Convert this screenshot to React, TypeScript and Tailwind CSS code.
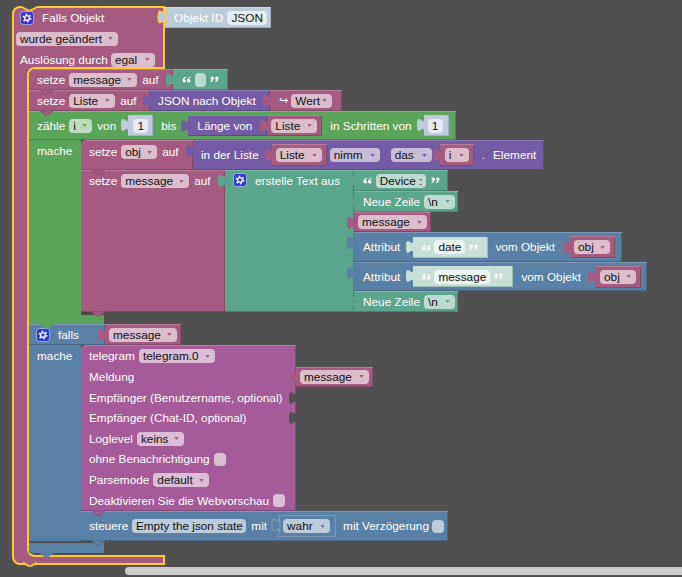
import React from "react";
import clsx from "clsx";

type ToneName = "mag" | "green" | "teal" | "purple" | "blue" | "tele";
const TONES: Record<ToneName, { block: string; field: string; fill: string; dark: string }> = {
  mag: { block: "bg-[#a55b80] shadow-[inset_0_1px_0_#b87d9a,inset_-1px_0_0_#844966,inset_0_-1px_0_#844966]", field: "bg-[#dbbdcc]", fill: "#a55b80", dark: "#844966" },
  green: { block: "bg-[#5ba55b] shadow-[inset_0_1px_0_#7cb77c,inset_-1px_0_0_#498449,inset_0_-1px_0_#498449]", field: "bg-[#bddbbd]", fill: "#5ba55b", dark: "#498449" },
  teal: { block: "bg-[#5ba58c] shadow-[inset_0_1px_0_#7cb7a3,inset_-1px_0_0_#498470,inset_0_-1px_0_#498470]", field: "bg-[#bddbd1]", fill: "#5ba58c", dark: "#498470" },
  purple: { block: "bg-[#745ba5] shadow-[inset_0_1px_0_#907cb7,inset_-1px_0_0_#5d4984,inset_0_-1px_0_#5d4984]", field: "bg-[#c7bddb]", fill: "#745ba5", dark: "#5d4984" },
  blue: { block: "bg-[#5b80a5] shadow-[inset_0_1px_0_#7c99b7,inset_-1px_0_0_#496684,inset_0_-1px_0_#496684]", field: "bg-[#bdccdb]", fill: "#5b80a5", dark: "#496684" },
  tele: { block: "bg-[#a55b99] shadow-[inset_0_1px_0_#b77cad,inset_-1px_0_0_#84497a,inset_0_-1px_0_#84497a]", field: "bg-[#dbbdd6]", fill: "#a55b99", dark: "#84497a" },
};

function Tab({ fill, stroke, className }: { fill: string; stroke?: string; className?: string }) {
  return (
    <svg viewBox="0 0 9 15" className={clsx("absolute right-[calc(100%-1px)] z-10 h-[14px] w-[8px] overflow-visible", className)} aria-hidden="true">
      <path d="M9,0 h-1 c0,10 -8,-8 -8,7.5 s8,-2.5 8,7.5 h1 z" fill={fill} stroke={stroke ?? "none"} strokeWidth={stroke ? 1.2 : 0} />
    </svg>
  );
}

function Slot() {
  return (
    <div className="relative h-[14px] w-0 shrink-0">
      <svg viewBox="0 0 9 15" className="absolute left-[-7px] top-0 h-[14px] w-[8px]" aria-hidden="true">
        <path d="M9,0 h-1 c0,10 -8,-8 -8,7.5 s8,-2.5 8,7.5 h1 z" fill="#505050" />
      </svg>
    </div>
  );
}

function Notch({ fill, dark }: { fill: string; dark: string }) {
  return (
    <svg viewBox="0 -1 13 6" className="absolute left-[11px] top-[calc(100%-1px)] z-10 h-[6px] w-[13px]" aria-hidden="true">
      <path d="M0 0l5 4h3l5-4z" fill={fill} stroke={dark} strokeWidth=".8" />
      <path d="M0 -.5h13v1H0z" fill={fill} />
    </svg>
  );
}

function B({
  tone,
  className,
  tab,
  notch,
  children,
}: {
  tone: ToneName;
  className?: string;
  tab?: boolean;
  notch?: boolean;
  children?: React.ReactNode;
}) {
  const t = TONES[tone];
  return (
    <div className={clsx("relative flex shrink-0 items-center", t.block, className)}>
      {tab && <Tab fill={t.fill} className="top-[4px]" />}
      {children}
      {notch && <Notch fill={t.fill} dark={t.dark} />}
    </div>
  );
}

function Txt({ children, className }: { children: React.ReactNode; className?: string }) {
  return <span className={clsx("shrink-0 whitespace-nowrap leading-[14px] text-white", className)}>{children}</span>;
}

function Dd({ label, tone, className, field }: { label: string; tone: ToneName; className: string; field?: string }) {
  const t = TONES[tone];
  return (
    <div className={clsx("relative flex h-[14px] shrink-0 items-center rounded-[4px] pl-[4px] leading-[14px] text-[#111]", field ?? t.field, className)}>
      {label}
      <svg viewBox="0 0 6 4" className="absolute right-[5px] top-[5.5px] h-[3px] w-[5px]" aria-hidden="true">
        <path d="M0 0h6L3 4z" fill={t.fill} />
      </svg>
    </div>
  );
}

function Field({ children, className }: { children?: React.ReactNode; className: string }) {
  return <div className={clsx("flex h-[14px] shrink-0 items-center justify-center rounded-[4px] leading-[14px] text-[#111]", className)}>{children}</div>;
}

function Quote({ close, className, fill = "#fff" }: { close?: boolean; className?: string; fill?: string }) {
  return (
    <svg viewBox="0 0 10 7" className={clsx("h-[7px] w-[9px] shrink-0", close && "rotate-180", className)} aria-hidden="true">
      <path d="M4 .5C2 1.2.5 2.8.5 4.8a1.9 1.9 0 1 0 2-1.7c.2-.7.8-1.2 1.9-1.6z" fill={fill} />
      <path d="M9.2 .5C7.2 1.2 5.7 2.8 5.7 4.8a1.9 1.9 0 1 0 2-1.7c.2-.7.8-1.2 1.9-1.6z" fill={fill} />
    </svg>
  );
}

function Gear({ fill = "#2a30d6", className }: { fill?: string; className?: string }) {
  return (
    <svg viewBox="0 0 14 14" className={clsx("h-[14px] w-[14px] shrink-0", className)} aria-hidden="true">
      <rect x=".5" y=".5" width="13" height="13" rx="3" fill={fill} stroke="#c8c8e8" strokeOpacity=".7" />
      <circle cx="7" cy="7" r="2.4" fill="none" stroke="#fff" strokeWidth="1.4" />
      <circle cx="7" cy="7" r="3.9" fill="none" stroke="#fff" strokeWidth="1.2" strokeDasharray="1.8 2.3" />
    </svg>
  );
}

function Check({ className }: { className: string }) {
  return <div className={clsx("h-[13px] w-[12px] shrink-0 rounded-[4px]", className)} />;
}

export default function App() {
  return (
    <div className="relative h-[577px] w-[682px] overflow-hidden bg-[#505050] font-['Liberation_Sans',Arial,sans-serif] text-[11.8px]">
      <div className="flex flex-col pl-[12px] pt-[6px]">
        {/* Top row: trigger head and its attached value */}
        <div className="flex">
          <div className="relative flex h-[61px] w-[153px] shrink-0 flex-col rounded-tl-[8px] border-x-2 border-t-2 border-[#fdc835] bg-[#a55b80]">
            <svg viewBox="0 0 15 5" className="absolute left-[8px] top-[-2px] h-[5px] w-[15px]" aria-hidden="true">
              <path d="M0 1l6 3.4h3L15 1V0H0z" fill="#505050" />
              <path d="M0 1l6 3.4h3L15 1" fill="none" stroke="#fdc835" strokeWidth="1.8" />
            </svg>
            <div className="flex h-[20px] shrink-0 items-center pl-[6px]">
              <Gear fill="#3a2fd0" />
              <Txt className="ml-[8px]">Falls Objekt</Txt>
            </div>
            <div className="flex h-[21px] shrink-0 items-center pl-[2px]">
              <Dd label="wurde geändert" tone="mag" className="w-[102px]" />
            </div>
            <div className="flex h-[21px] shrink-0 items-center pl-[6px]">
              <Txt>Auslösung durch</Txt>
              <Dd label="egal" tone="mag" className="ml-[3px] w-[44px]" />
            </div>
          </div>
          <div className="relative mt-[1px] flex h-[21px] w-[106px] shrink-0 items-center bg-[#bdccdb] pl-[9px] shadow-[inset_0_1px_0_#d0dbe6,inset_-1px_0_0_#9fb0c2,inset_0_-1px_0_#9fb0c2]">
            <Tab fill="#bdccdb" stroke="#fdc835" className="top-[3px]" />
            <Txt>Objekt ID</Txt>
            <Field className="ml-[4px] w-[40px] bg-[#e6edf3]">JSON</Field>
          </div>
        </div>

        {/* Statement body */}
        <div className="flex w-[153px] border-l-2 border-[#fdc835] bg-[#a55b80] pl-[13px]">
          <div className="flex w-[138px] flex-col rounded-l-[8px] border-b-2 border-l-2 border-t-2 border-[#fdc835] bg-[#505050] pb-[2px]">
            {/* setze message */}
            <div className="flex">
              <B tone="mag" notch className="h-[21px] w-[144px] rounded-tl-[6px] pl-[8px]">
                <Txt>setze</Txt>
                <Dd label="message" tone="mag" className="ml-[4px] w-[68px]" />
                <Txt className="ml-[5px]">auf</Txt>
              </B>
              <B tone="teal" tab className="h-[21px] w-[55px] pl-[9px]">
                <Quote />
                <Field className="ml-[4px] w-[11px] bg-[#bddbd1]" />
                <Quote close className="ml-[4px]" />
              </B>
            </div>
            {/* setze Liste */}
            <div className="flex">
              <B tone="mag" notch className="h-[21px] w-[121px] pl-[8px]">
                <Txt>setze</Txt>
                <Dd label="Liste" tone="mag" className="ml-[4px] w-[46px]" />
                <Txt className="ml-[5px]">auf</Txt>
              </B>
              <B tone="purple" tab className="h-[21px] w-[120px] pl-[8px]">
                <Txt>JSON nach Objekt</Txt>
              </B>
              <B tone="mag" tab className="h-[21px] w-[72px] pl-[9px]">
                <Txt className="font-['DejaVu_Sans',sans-serif] text-[11px]">↪</Txt>
                <Dd label="Wert" tone="mag" className="ml-[3px] w-[41px]" />
              </B>
            </div>
            {/* zähle */}
            <div className="flex w-[427px] flex-col">
              <B tone="green" className="h-[29px] w-[427px] pl-[8px]">
                <Txt>zähle</Txt>
                <Dd label="i" tone="green" className="ml-[4px] w-[23px]" />
                <Txt className="ml-[5px]">von</Txt>
                <div className="relative ml-[12px] flex h-[21px] w-[25px] shrink-0 items-center bg-[#c3c9dd] pl-[5px] shadow-[inset_-1px_0_0_#a3abc6,inset_0_-1px_0_#a3abc6]">
                  <Tab fill="#c3c9dd" className="top-[3px]" />
                  <Field className="w-[15px] bg-[#e7eaf2]">1</Field>
                </div>
                <Txt className="ml-[8px]">bis</Txt>
                <B tone="purple" tab className="ml-[12px] h-[21px] w-[79px] pl-[9px]">
                  <Txt>Länge von</Txt>
                </B>
                <B tone="mag" tab className="h-[21px] w-[55px] pl-[4px]">
                  <Dd label="Liste" tone="mag" className="w-[46px]" />
                </B>
                <Txt className="ml-[8px]">in Schritten von</Txt>
                <div className="relative ml-[12px] flex h-[21px] w-[25px] shrink-0 items-center bg-[#c3c9dd] pl-[4px] shadow-[inset_-1px_0_0_#a3abc6,inset_0_-1px_0_#a3abc6]">
                  <Tab fill="#c3c9dd" className="top-[3px]" />
                  <Field className="w-[15px] bg-[#e7eaf2]">1</Field>
                </div>
              </B>
              <div className="flex">
                <div className="w-[52px] shrink-0 bg-[#5ba55b] pl-[8px] pt-[3px]">
                  <Txt>mache</Txt>
                </div>
                <div className="flex flex-col">
                  {/* setze obj */}
                  <div className="flex">
                    <B tone="mag" notch className="h-[30px] w-[112px] items-start rounded-tl-[6px] pl-[8px] pt-[5px]">
                      <Txt>setze</Txt>
                      <Dd label="obj" tone="mag" className="ml-[4px] w-[36px]" />
                      <Txt className="ml-[5px]">auf</Txt>
                    </B>
                    <B tone="purple" tab className="h-[30px] w-[351px] pl-[8px]">
                      <Txt>in der Liste</Txt>
                      <B tone="mag" tab className="ml-[13px] h-[22px] w-[55px] pl-[4px]">
                        <Dd label="Liste" tone="mag" className="w-[46px]" />
                      </B>
                      <Dd label="nimm" tone="purple" className="ml-[3px] w-[50px]" />
                      <Dd label="das" tone="purple" className="ml-[11px] w-[41px]" />
                      <B tone="mag" tab className="ml-[8px] h-[22px] w-[34px] pl-[5px]">
                        <Dd label="i" tone="mag" className="w-[24px]" />
                      </B>
                      <Txt className="ml-[8px]">.</Txt>
                      <Txt className="ml-[8px]">Element</Txt>
                    </B>
                  </div>
                  {/* setze message + erstelle Text */}
                  <div className="flex">
                    <B tone="mag" notch className="h-[142px] w-[144px] items-start pl-[8px] pt-[4px]">
                      <Txt>setze</Txt>
                      <Dd label="message" tone="mag" className="ml-[4px] w-[68px]" />
                      <Txt className="ml-[5px]">auf</Txt>
                    </B>
                    <B tone="teal" tab className="h-[142px] w-[129px] items-start pl-[8px] pt-[3px]">
                      <Gear fill="#2a3ad8" />
                      <Txt className="ml-[8px] mt-[1px]">erstelle Text aus</Txt>
                    </B>
                    <div className="flex flex-col">
                      <B tone="teal" tab className="h-[21px] w-[94px] pl-[9px]">
                        <Quote />
                        <Field className="ml-[4px] w-[50px] bg-[#bddbd1]">Device :</Field>
                        <Quote close className="ml-[5px]" />
                      </B>
                      <B tone="teal" tab className="h-[21px] w-[104px] pl-[9px]">
                        <Txt>Neue Zeile</Txt>
                        <Dd label="\n" tone="teal" className="ml-[4px] w-[31px]" />
                      </B>
                      <B tone="mag" tab className="h-[20px] w-[77px] pl-[4px]">
                        <Dd label="message" tone="mag" className="w-[69px]" />
                      </B>
                      <B tone="blue" tab className="h-[30px] w-[268px] pl-[9px]">
                        <Txt>Attribut</Txt>
                        <div className="relative ml-[13px] flex h-[21px] w-[75px] shrink-0 items-center bg-[#c7e0d8] pl-[9px] shadow-[inset_-1px_0_0_#9dbdb2,inset_0_-1px_0_#9dbdb2]">
                          <Tab fill="#c7e0d8" className="top-[3px]" />
                          <Quote />
                          <Field className="ml-[3px] w-[31px] bg-[#edf5f2]">date</Field>
                          <Quote close className="ml-[4px]" />
                        </div>
                        <Txt className="ml-[7px]">vom Objekt</Txt>
                        <B tone="mag" tab className="ml-[15px] h-[22px] w-[45px] pl-[4px]">
                          <Dd label="obj" tone="mag" className="w-[36px]" />
                        </B>
                      </B>
                      <B tone="blue" tab className="h-[29px] w-[293px] pl-[9px]">
                        <Txt>Attribut</Txt>
                        <div className="relative ml-[13px] flex h-[21px] w-[100px] shrink-0 items-center bg-[#c7e0d8] pl-[9px] shadow-[inset_-1px_0_0_#9dbdb2,inset_0_-1px_0_#9dbdb2]">
                          <Tab fill="#c7e0d8" className="top-[3px]" />
                          <Quote />
                          <Field className="ml-[3px] w-[56px] bg-[#edf5f2]">message</Field>
                          <Quote close className="ml-[4px]" />
                        </div>
                        <Txt className="ml-[8px]">vom Objekt</Txt>
                        <B tone="mag" tab className="ml-[14px] h-[22px] w-[46px] pl-[5px]">
                          <Dd label="obj" tone="mag" className="w-[36px]" />
                        </B>
                      </B>
                      <B tone="teal" tab className="h-[21px] w-[104px] pl-[9px]">
                        <Txt>Neue Zeile</Txt>
                        <Dd label="\n" tone="teal" className="ml-[4px] w-[31px]" />
                      </B>
                    </div>
                  </div>
                </div>
              </div>
              <div className="flex h-[3px] w-[75px]">
                <div className="w-[52px] bg-[#5ba55b]" />
                <div className="flex-1 rounded-bl-[3px] bg-[#484848]" />
              </div>
              <div className="relative h-[9px] w-[75px] bg-[#5ba55b]">
                <Notch fill="#5ba55b" dark="#5ba55b" />
              </div>
            </div>
            {/* falls */}
            <div className="flex">
              <B tone="blue" className="h-[21px] w-[76px] pl-[7px]">
                <Gear fill="#2a3ad8" />
                <Txt className="ml-[8px]">falls</Txt>
              </B>
              <B tone="mag" tab className="h-[21px] w-[76px] pl-[4px]">
                <Dd label="message" tone="mag" className="w-[68px]" />
              </B>
            </div>
            <div className="flex">
              <div className="w-[52px] shrink-0 bg-[#5b80a5] pl-[8px] pt-[3px]">
                <Txt>mache</Txt>
              </div>
              <div className="flex flex-col">
                <B tone="tele" notch className="h-[166px] w-[215px] flex-col items-stretch rounded-tl-[6px] pl-[8px] pt-[1px]">
                  <div className="flex flex-1 items-center">
                    <Txt>telegram</Txt>
                    <Dd label="telegram.0" tone="tele" className="ml-[4px] w-[76px]" />
                  </div>
                  <div className="flex flex-1 items-center">
                    <Txt className="w-[207px]">Meldung</Txt>
                    <B tone="mag" tab className="h-[20px] w-[77px] pl-[4px]">
                      <Dd label="message" tone="mag" className="w-[69px]" />
                    </B>
                  </div>
                  <div className="flex flex-1 items-center">
                    <Txt className="w-[207px]">Empfänger (Benutzername, optional)</Txt>
                    <Slot />
                  </div>
                  <div className="flex flex-1 items-center">
                    <Txt className="w-[207px]">Empfänger (Chat-ID, optional)</Txt>
                    <Slot />
                  </div>
                  <div className="flex flex-1 items-center">
                    <Txt>Loglevel</Txt>
                    <Dd label="keins" tone="tele" className="ml-[4px] w-[47px]" />
                  </div>
                  <div className="flex flex-1 items-center">
                    <Txt>ohne Benachrichtigung</Txt>
                    <Check className="ml-[4px] bg-[#dbbdd6]" />
                  </div>
                  <div className="flex flex-1 items-center">
                    <Txt>Parsemode</Txt>
                    <Dd label="default" tone="tele" className="ml-[4px] w-[56px]" />
                  </div>
                  <div className="flex flex-1 items-center">
                    <Txt>Deaktivieren Sie die Webvorschau</Txt>
                    <Check className="ml-[4px] bg-[#dbbdd6]" />
                  </div>
                </B>
                <B tone="blue" notch className="h-[30px] w-[367px] rounded-bl-[4px] pl-[8px]">
                  <Txt>steuere</Txt>
                  <Field className="ml-[4px] w-[114px] bg-[#bdccdb]">Empty the json state</Field>
                  <Txt className="ml-[5px]">mit</Txt>
                  <div className="relative ml-[11px] flex h-[22px] w-[58px] shrink-0 items-center border border-[#7c99b7] bg-[#5b80a5] pl-[4px]">
                    <Tab fill="#5b80a5" stroke="#7c99b7" className="top-[2px]" />
                    <Dd label="wahr" tone="blue" className="w-[47px]" />
                  </div>
                  <Txt className="ml-[7px]">mit Verzögerung</Txt>
                  <Check className="ml-[3px] bg-[#bdccdb]" />
                </B>
              </div>
            </div>
            <div className="h-[2px] w-[75px] pl-[52px]">
              <div className="h-full rounded-bl-[3px] bg-[#484848]" />
            </div>
            <div className="relative h-[10px] w-[75px] bg-[#5b80a5]">
              <Notch fill="#5b80a5" dark="#5b80a5" />
            </div>
          </div>
        </div>

        {/* Foot of the trigger */}
        <div className="relative h-[8px] w-[153px] rounded-bl-[8px] border-x-2 border-b-2 border-[#fdc835] bg-[#a55b80]">
          <svg viewBox="0 0 14 6" className="absolute left-[9px] top-[4px] h-[6px] w-[14px]" aria-hidden="true">
            <path d="M0 1l5.5 3.6h3L14 1V0H0z" fill="#a55b80" />
            <path d="M0 1.6l5.5 3.2h3L14 1.6" fill="none" stroke="#fdc835" strokeWidth="1.8" />
          </svg>
        </div>
      </div>

      {/* Horizontal scrollbar, laid over the canvas */}
      <div className="absolute left-[125px] right-0 top-[567px] h-[8px] rounded-l-[4px] bg-[#cccccc]" />
    </div>
  );
}
